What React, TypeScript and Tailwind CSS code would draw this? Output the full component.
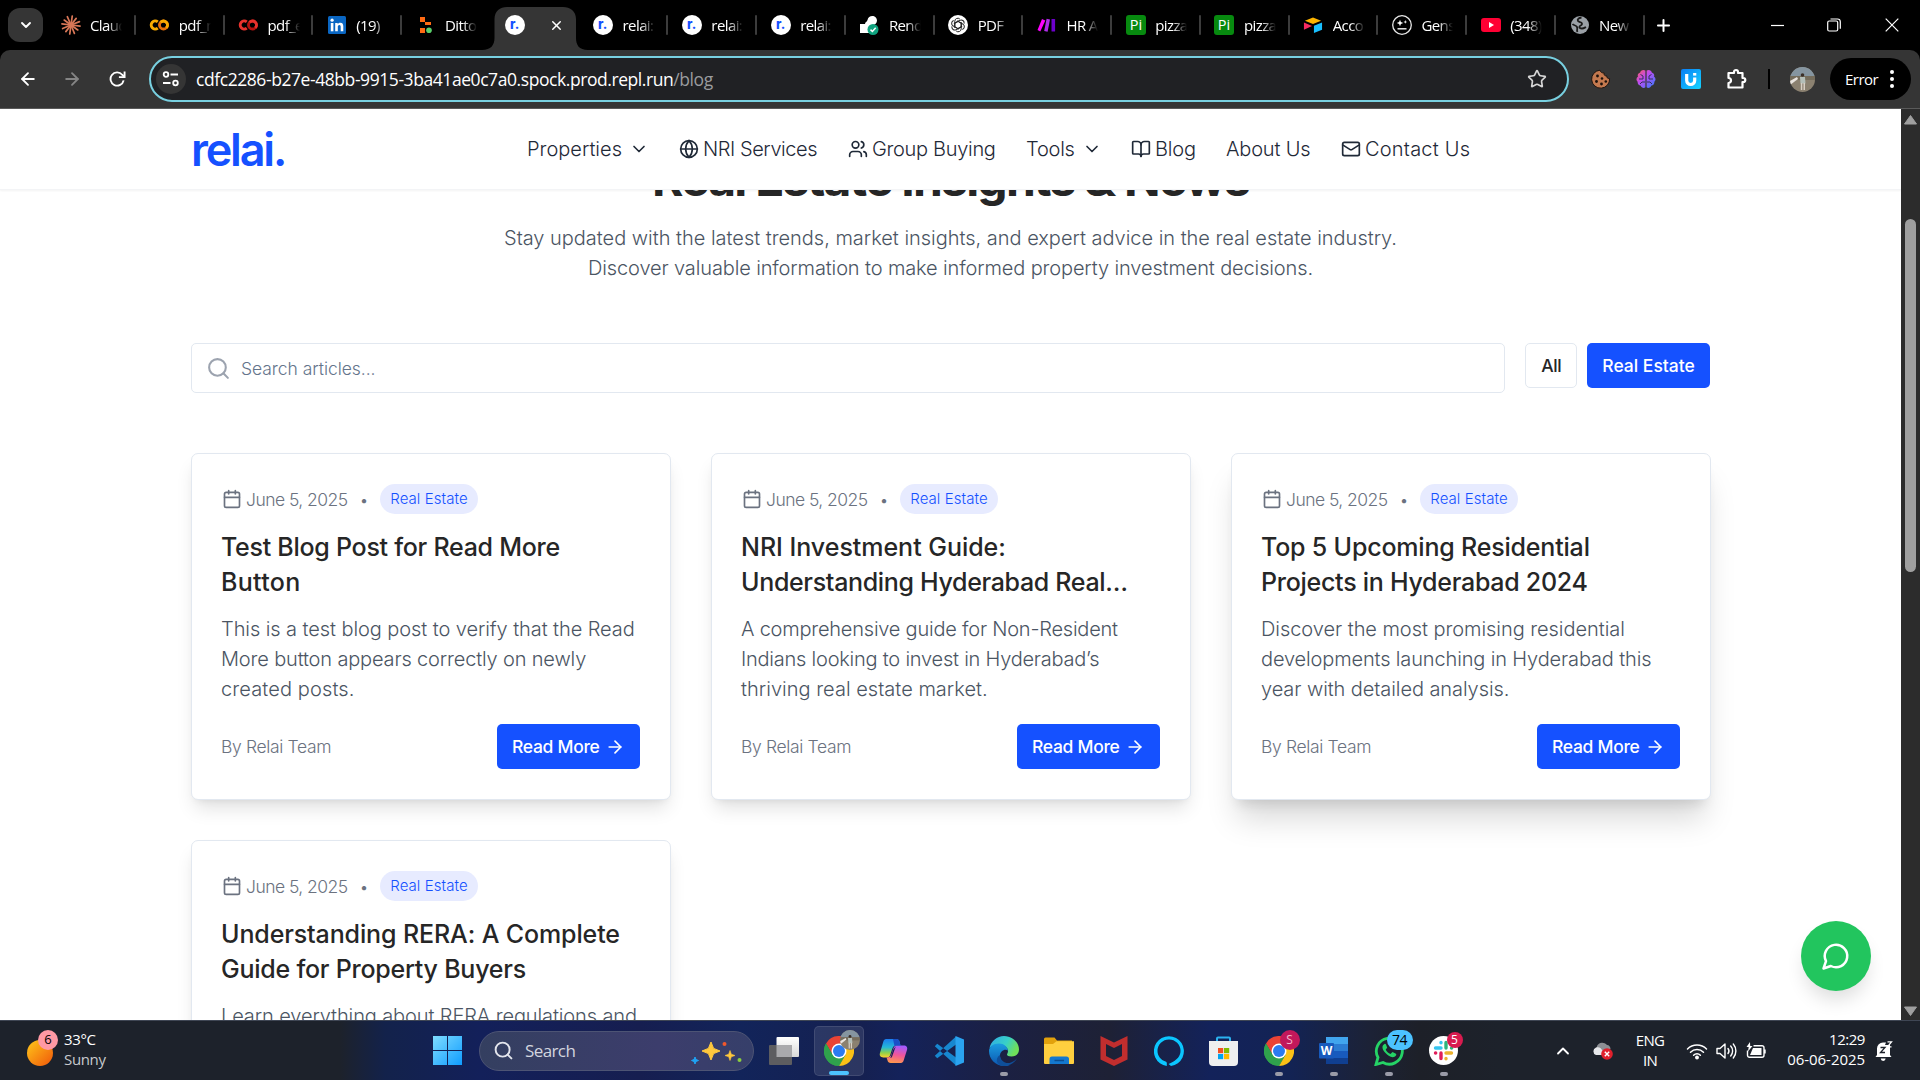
import React, { ReactNode } from 'react';
import {
  ArrowLeft, ArrowRight, BookOpen, Calendar, ChevronDown, ChevronUp, Globe, Mail, Plus, Search, Star, Users, X,
} from 'lucide-react';

/* ---------- favicons ---------- */

const RelaiIcon = () => (
  <svg width="20" height="20" viewBox="0 0 20 20">
    <circle cx="10" cy="10" r="10" fill="#fff" />
    <text x="9.7" y="14" textAnchor="middle" fontFamily="Inter, sans-serif" fontWeight="800" fontSize="13" fill="#1551ff">r.</text>
  </svg>
);

const ClaudeIcon = () => (
  <svg width="20" height="20" viewBox="0 0 20 20" stroke="#d97757" strokeWidth="1.7" strokeLinecap="round">
    {[8, 38, 68, 97, 126, 158, 188, 218, 247, 277, 306, 336].map((a, i) => (
      <line key={a} x1="10" y1="10" x2="10" y2={i % 3 === 1 ? 1.6 : 0.9} transform={`rotate(${a} 10 10)`} />
    ))}
  </svg>
);

const ColabIcon = ({ a, b }: { a: string; b: string }) => (
  <svg width="21" height="20" viewBox="0 0 21 20" fill="none" strokeWidth="3">
    <circle cx="15.2" cy="10" r="4.2" stroke={b} />
    <path d="M9.2 6.8A4.2 4.2 0 1 0 9.2 13.2" stroke={a} />
    <path d="M12.2 7A4.2 4.2 0 0 1 18.2 13" stroke={a} />
  </svg>
);

const LinkedInIcon = () => (
  <svg width="18" height="18" viewBox="0 0 18 18">
    <rect width="18" height="18" rx="1.5" fill="#0a66c2" />
    <g fill="#fff">
      <rect x="2.8" y="7" width="2.6" height="8.3" />
      <circle cx="4.1" cy="4.2" r="1.6" />
      <path d="M7.2 7h2.5v1.2c.5-.8 1.4-1.4 2.6-1.4 2.4 0 3 1.6 3 3.8v4.7h-2.6v-4.2c0-1.1-.1-2.1-1.3-2.1-1.3 0-1.6 1-1.6 2v4.3H7.2z" />
    </g>
  </svg>
);

const DittoIcon = () => (
  <svg width="20" height="20" viewBox="0 0 20 20">
    <path d="M4 2h5v5H4zM9 7h6v3H9zM4 13h5v5H4z" fill="#ff6a13" />
    <circle cx="13" cy="15.2" r="2.8" fill="#5ad06b" />
  </svg>
);

const RenderIcon = () => (
  <svg width="20" height="20" viewBox="0 0 20 20">
    <path d="M1 9h5c0-2 2-2 2.500-4C9 2.500 11 1 13.300 1c2.500 0 4.700 2 4.700 4.600 0 2.700-2 4.500-4.500 4.700-1.800.1-3.500 1-3.500 3V18H1z" fill="#fff" />
    <circle cx="14" cy="14.500" r="5.500" fill="#10a37f" />
    <path d="M11.500 14.600l1.900 1.900 3.300-3.800" stroke="#fff" strokeWidth="1.500" fill="none" />
  </svg>
);

const OpenAiIcon = () => (
  <svg width="20" height="20" viewBox="0 0 20 20">
    <circle cx="10" cy="10" r="10" fill="#fff" />
    <g fill="none" stroke="#222" strokeWidth="1">
      {[0, 60, 120, 180, 240, 300].map((a) => (
        <path key={a} d="M6.800 8V6.200a3 3 0 0 1 5-2.200M9 5.800l4.300 2.500v3.600" transform={`rotate(${a} 10 10)`} />
      ))}
    </g>
  </svg>
);

const MakeIcon = () => (
  <svg width="20" height="20" viewBox="0 0 20 20">
    <path d="M5 4l3.300 1.500-5 11L.500 15z" fill="#ff00ff" />
    <path d="M9.600 3.800l3.400.7-2.400 12.300-3.400-.8z" fill="#b02de9" />
    <rect x="14.500" y="4" width="3.600" height="12.500" rx=".6" fill="#6d00cc" />
  </svg>
);

const PiIcon = () => (
  <svg width="20" height="20" viewBox="0 0 20 20">
    <rect width="20" height="20" rx="3" fill="#078a0f" />
    <text x="10" y="15.200" textAnchor="middle" fontFamily="Open Sans, sans-serif" fontSize="14.500" fill="#fff">Pi</text>
  </svg>
);

const AirtableIcon = () => (
  <svg width="21" height="20" viewBox="0 0 21 20">
    <path d="M2 5.500L10.500 2 19 5.500 10.500 9z" fill="#fcb400" />
    <path d="M20 7.500v7.500l-8.500 3.500v-7.700z" fill="#18bfff" />
    <path d="M1 7.500l8.500 3.500L1 15z" fill="#f82b60" />
  </svg>
);

const GensparkIcon = () => (
  <svg width="20" height="20" viewBox="0 0 20 20" fill="none" stroke="#e8e8e8">
    <circle cx="10" cy="10" r="9.300" strokeWidth="1.300" />
    <path d="M5.500 13.800h9" strokeWidth="1.500" />
    <path d="M8 4.800l.9 2.300 2.300.9-2.300.9L8 11.200l-.9-2.300L4.800 8l2.300-.9zM13.300 5l.5 1.400 1.400.5-1.400.5-.5 1.400-.5-1.400-1.400-.5 1.400-.5z" fill="#fff" stroke="none" />
  </svg>
);

const YoutubeIcon = () => (
  <svg width="20" height="20" viewBox="0 0 20 20">
    <rect y="3" width="20" height="14" rx="3" fill="#ff0033" />
    <path d="M8 7l5 3-5 3z" fill="#fff" />
  </svg>
);

const GlobeIcon = () => (
  <svg width="20" height="20" viewBox="0 0 20 20">
    <circle cx="10" cy="10" r="9" fill="#9aa0a6" />
    <path d="M11.500 2.500c-3 .5-4.500 2-3.500 3.500s3.500.5 4 2.500-2 1.800-2.500 3 .8 2 2.500 2 3-1 4-1.500M2.500 9c1 1.500 3.500 1 4.500 3s-.8 3 .5 5" stroke="#1a1a1a" strokeWidth="1.800" fill="none" />
  </svg>
);

const tabs: { icon: ReactNode; title?: string; active?: boolean }[] = [
  { icon: <ClaudeIcon />, title: 'Claude' },
  { icon: <ColabIcon a="#f9ab00" b="#e8710a" />, title: 'pdf_m' },
  { icon: <ColabIcon a="#e8322d" b="#b3120f" />, title: 'pdf_e' },
  { icon: <LinkedInIcon />, title: '(19)' },
  { icon: <DittoIcon />, title: 'Ditto' },
  { icon: <RelaiIcon />, active: true },
  { icon: <RelaiIcon />, title: 'relai:' },
  { icon: <RelaiIcon />, title: 'relai:' },
  { icon: <RelaiIcon />, title: 'relai:' },
  { icon: <RenderIcon />, title: 'Rend' },
  { icon: <OpenAiIcon />, title: 'PDF' },
  { icon: <MakeIcon />, title: 'HR A' },
  { icon: <PiIcon />, title: 'pizza' },
  { icon: <PiIcon />, title: 'pizza' },
  { icon: <AirtableIcon />, title: 'Acco' },
  { icon: <GensparkIcon />, title: 'Gens' },
  { icon: <YoutubeIcon />, title: '(348)' },
  { icon: <GlobeIcon />, title: 'New' },
];

function TabStrip() {
  return (
    <div className="flex h-[50px] items-end bg-black">
      <button className="mb-2 ml-2 mr-1 flex h-[34px] w-[35px] items-center justify-center rounded-xl bg-[#353535]">
        <ChevronDown size={16} strokeWidth={2.800} />
      </button>
      {tabs.map((t, i) =>
        t.active ? (
          <div key={i} className="relative flex h-[50px] w-[88.780px] shrink-0 items-end">
            <svg className="absolute bottom-0 left-[-9px]" width="106" height="43" viewBox="0 0 106 43">
              <path d="M0 43C9 43 12.500 38 12.500 31V12C12.500 4 18 0 25 0H81C88 0 94 4 94 12V31C94 38 97 43 106 43Z" fill="#353535" />
            </svg>
            <div className="relative flex h-[50px] items-center pl-[14px]">
              {t.icon}
              <X size={15} strokeWidth={2.300} className="ml-[24px]" />
            </div>
          </div>
        ) : (
          <div key={i} className="flex h-[50px] w-[88.780px] shrink-0 items-center">
            <div className="ml-[13.500px] flex w-5 justify-center">{t.icon}</div>
            <div className="ml-[9.500px] w-[32px] overflow-hidden whitespace-nowrap text-[15px] tracking-[-0.600px] [mask-image:linear-gradient(to_right,black_55%,transparent)]">
              {t.title}
            </div>
            {i !== 4 && <div className="ml-auto h-5 w-[2px] rounded bg-[#3c3c3c]" />}
          </div>
        ),
      )}
      <div className="flex h-[50px] flex-1 items-center pl-[9px]">
        <Plus size={19} strokeWidth={2.500} />
        <svg className="ml-[98px]" width="13" height="13" viewBox="0 0 13 13"><path d="M0 6.500h13" stroke="#fff" strokeWidth="1.200" /></svg>
        <svg className="ml-[43px]" width="14" height="14" viewBox="0 0 14 14" fill="none" stroke="#fff" strokeWidth="1.200">
          <rect x=".7" y="3" width="10" height="10" rx="1.500" /><path d="M3.500 1h7a2.800 2.800 0 0 1 2.800 2.800v7" />
        </svg>
        <svg className="ml-[44px]" width="14" height="14" viewBox="0 0 14 14"><path d="M.7.7l12.600 12.600M13.300.7L.7 13.300" stroke="#fff" strokeWidth="1.200" /></svg>
      </div>
    </div>
  );
}

/* Beach photo used for the signed-in profile */
const Avatar = ({ size }: { size: number }) => (
  <svg width={size} height={size} viewBox="0 0 25 25">
    <defs>
      <clipPath id="avatarClip"><circle cx="12.500" cy="12.500" r="12.500" /></clipPath>
    </defs>
    <g clipPath="url(#avatarClip)">
      <rect width="25" height="25" fill="#8b8170" />
      <rect width="25" height="9" fill="#8595a0" />
      <rect y="9" width="25" height="4" fill="#756d5c" />
      <path d="M0 14l7-4 1 2-8 6z" fill="#e9e4df" />
      <circle cx="12.500" cy="8" r="1.800" fill="#3a2f28" />
      <path d="M10 10h5l.5 6.500h-5z" fill="#b4bfb9" />
      <path d="M10.800 16h1.500v7h-1.500zM13.500 16H15v7h-1.500z" fill="#d8cfc4" />
    </g>
  </svg>
);

function Toolbar() {
  return (
    <div className="h-[59px] bg-black">
      <div className="flex h-[59px] items-center rounded-t-[10px] border-b border-[#5a5a5a] bg-[#353535]">
        <ArrowLeft size={20} strokeWidth={2.200} className="ml-[18px]" />
        <ArrowRight size={20} strokeWidth={2.200} className="ml-[24px] text-[#858585]" />
        <svg className="ml-[27px]" width="17" height="18" viewBox="0 0 18 18" fill="none" stroke="#fff" strokeWidth="2">
          <path d="M15.500 10.500A7 7 0 1 1 14 4.500L16 6.500" /><path d="M16.500 1v6h-6" />
        </svg>
        <div className="ml-[23px] flex h-[46px] w-[1420px] items-center rounded-full border-2 border-[#78d0e0] bg-[#202124] pl-[5px]">
          <div className="flex size-[30px] items-center justify-center rounded-full bg-[#353535]">
            <svg width="18" height="18" viewBox="0 0 18 18" fill="none" stroke="#fff" strokeWidth="1.800">
              <circle cx="4" cy="4.500" r="2.300" /><path d="M8.500 4.500H16M1 13h7.500" /><circle cx="13.500" cy="13" r="2.300" />
            </svg>
          </div>
          <div className="ml-[10px] mt-[1px] text-[17.500px] tracking-[-0.430px]">
            cdfc2286-b27e-48bb-9915-3ba41ae0c7a0.spock.prod.repl.run<span className="text-[#9a9b9e]">/blog</span>
          </div>
          <Star size={20} strokeWidth={2} className="ml-auto mr-[20px] text-[#d6d6d6]" />
        </div>
        <svg className="ml-[22px]" width="20" height="20" viewBox="0 0 20 20">
          <path d="M9 1.200A9 9 0 1 0 18.600 9.500c-2 .3-3-1-2.800-2.600-2 .2-3.200-1-2.600-2.900C11 4.200 9.300 3 9 1.200z" fill="#c4794f" stroke="#201510" strokeWidth="1" />
          <g fill="#1c110c"><circle cx="6.500" cy="7" r="1.400" /><circle cx="11" cy="9.500" r="1.300" /><circle cx="5.500" cy="12.500" r="1.400" /><circle cx="10.500" cy="15" r="1.400" /><circle cx="14.800" cy="12.500" r="1.300" /></g>
        </svg>
        <svg className="ml-[25px]" width="20" height="20" viewBox="0 0 20 20">
          <defs><linearGradient id="brain" x1="0" y1="0" x2="1" y2="1"><stop offset="0" stopColor="#ff5a5a" /><stop offset=".4" stopColor="#c04cf0" /><stop offset="1" stopColor="#2f7dff" /></linearGradient></defs>
          <path d="M9.400 1.500C7 0 4.500 1.500 4.200 3.500 2 4 1.200 6 2 7.500 0 9 0 11.500 1.600 12.700 1.400 15 3 16.500 4.500 16.500 5.500 19 8 19.500 9.400 18.200zM10.600 1.500C13 0 15.500 1.500 15.800 3.500 18 4 18.800 6 18 7.500 20 9 20 11.500 18.400 12.700 18.600 15 17 16.500 15.500 16.500 14.500 19 12 19.500 10.600 18.200z" fill="url(#brain)" />
          <path d="M4.500 5.500l2.500 1.500v3H3M9 13H6l-2 2M15.500 5.500L13 7v3h4M11 13h3l2 2" fill="none" stroke="#35305a" strokeWidth="1" />
        </svg>
        <svg className="ml-[25px]" width="20" height="20" viewBox="0 0 20 20">
          <defs><linearGradient id="ui" x1="0" y1="0" x2="1" y2="1"><stop offset="0" stopColor="#0a7df5" /><stop offset="1" stopColor="#14d4ff" /></linearGradient></defs>
          <rect width="20" height="20" rx="2" fill="url(#ui)" />
          <path d="M5.700 5v6.500a4 4 0 0 0 8 0V8.500" fill="none" stroke="#fff" strokeWidth="3.200" />
          <rect x="12.100" y="4" width="3.200" height="2.600" fill="#fff" />
        </svg>
        <svg className="ml-[25px]" width="22" height="22" viewBox="0 0 22 22" fill="none" stroke="#fff" strokeWidth="2.200" strokeLinejoin="round">
          <path d="M2.500 5H8V4a2 2 0 0 1 4 0v1h4.500v5h.8a2 2 0 0 1 0 4h-.8v5.500h-14V15a2.500 2.500 0 0 0 0-5z" />
        </svg>
        <div className="ml-[20px] mr-[20px] h-5 w-[2px] bg-black" />
        <Avatar size={25} />
        <div className="ml-[15px] flex h-[42px] w-[81px] items-center rounded-full bg-black pl-[15px] text-[15px] tracking-[-0.500px]">
          Error
          <svg className="ml-[11px]" width="6" height="20" viewBox="0 0 6 20" fill="#fff"><circle cx="3" cy="3" r="2" /><circle cx="3" cy="10" r="2" /><circle cx="3" cy="17" r="2" /></svg>
        </div>
      </div>
    </div>
  );
}

/* ---------- page ---------- */

function SiteHeader() {
  return (
    <header className="relative z-10 flex h-[81px] shrink-0 items-center border-b border-[#f3f4f6] bg-white pl-[191px] shadow-xs">
      <div className="w-[336px] text-[45px] font-semibold leading-none tracking-[-2.200px] text-[#1551ff]">relai.</div>
      <nav className="flex items-center whitespace-nowrap text-[20px] font-light leading-[30px] text-[#1f2937]">
        <a className="flex w-[152px] items-center"><span>Properties</span><ChevronDown size={20} className="ml-[7px]" /></a>
        <a className="flex w-[169px] items-center gap-[4px] tracking-[-0.440px]"><Globe size={20} />NRI Services</a>
        <a className="flex w-[178px] items-center gap-[4px] tracking-[-0.320px]"><Users size={20} />Group Buying</a>
        <a className="flex w-[105px] items-center tracking-[-0.240px]">Tools<ChevronDown size={20} className="ml-[7px]" /></a>
        <a className="flex w-[95px] items-center gap-[4px] tracking-[-0.200px]"><BookOpen size={20} />Blog</a>
        <a className="w-[115px] tracking-[-0.180px]">About Us</a>
        <a className="flex items-center gap-[4px] tracking-[0.220px]"><Mail size={20} />Contact Us</a>
      </nav>
    </header>
  );
}

type Line = [text: string, tracking: string];

const posts: { title: Line[]; body: Line[]; shadow: string }[] = [
  {
    title: [['Test Blog Post for Read More', 'tracking-[-0.270px]'], ['Button', 'tracking-[0.300px]']],
    body: [
      ['This is a test blog post to verify that the Read', 'tracking-[-0.080px]'],
      ['More button appears correctly on newly', 'tracking-[-0.160px]'],
      ['created posts.', 'tracking-[0.120px]'],
    ],
    shadow: 'shadow-[0_12px_19px_-4px_rgba(0,0,0,0.12),0_4px_8px_-5px_rgba(0,0,0,0.1)]',
  },
  {
    title: [['NRI Investment Guide:', 'tracking-[-0.030px]'], ['Understanding Hyderabad Real…', 'tracking-[-0.330px]']],
    body: [
      ['A comprehensive guide for Non-Resident', 'tracking-[-0.220px]'],
      ['Indians looking to invest in Hyderabad’s', 'tracking-[-0.230px]'],
      ['thriving real estate market.', 'tracking-[0.020px]'],
    ],
    shadow: 'shadow-[0_12px_19px_-4px_rgba(0,0,0,0.12),0_4px_8px_-5px_rgba(0,0,0,0.1)]',
  },
  {
    title: [['Top 5 Upcoming Residential', 'tracking-[-0.190px]'], ['Projects in Hyderabad 2024', 'tracking-[-0.270px]']],
    body: [
      ['Discover the most promising residential', 'tracking-[-0.050px]'],
      ['developments launching in Hyderabad this', 'tracking-[-0.140px]'],
      ['year with detailed analysis.', 'tracking-[-0.080px]'],
    ],
    shadow: 'shadow-[0_25px_31px_-6px_rgba(0,0,0,0.15),0_10px_12px_-7px_rgba(0,0,0,0.12)]',
  },
  {
    title: [['Understanding RERA: A Complete', 'tracking-[-0.120px]'], ['Guide for Property Buyers', 'tracking-[-0.240px]']],
    body: [
      ['Learn everything about RERA regulations and', 'tracking-[-0.110px]'],
      ['how they protect property buyers in', 'tracking-[-0.110px]'],
      ['Telangana.', 'tracking-[-0.110px]'],
    ],
    shadow: 'shadow-[0_12px_19px_-4px_rgba(0,0,0,0.12),0_4px_8px_-5px_rgba(0,0,0,0.1)]',
  },
];

function PostCard({ post }: { post: (typeof posts)[number] }) {
  return (
    <article className={`h-[347px] rounded-[7px] border border-[#e2e8f0] bg-white py-[30px] pl-[29px] pr-[30px] whitespace-nowrap ${post.shadow}`}>
      <div className="flex h-[30px] items-center pl-[1px] text-[17.500px] font-light text-[#6b7280]">
        <Calendar size={20} />
        <span className="ml-[4px] mt-[2px] tracking-[-0.540px]">June 5, 2025</span>
        <span className="ml-[12px] mt-[1px] text-[16px]">•</span>
        <span className="ml-auto mr-[162px] flex h-[30px] w-[98px] items-center justify-center rounded-full bg-[#e7ebff] text-[15px] tracking-[0.080px] text-[#1551ff]">
          Real Estate
        </span>
      </div>
      <h2 className="mt-[16px] text-[25px] font-medium leading-[35px] text-[#262626]">
        {post.title.map(([t, c]) => <div key={t} className={c}>{t}</div>)}
      </h2>
      <div className="mt-[14px] text-[20px] font-light leading-[30px] text-[#4b5563]">
        {post.body.map(([t, c]) => <div key={t} className={c}>{t}</div>)}
      </div>
      <div className="mt-[20px] flex items-center justify-between">
        <span className="mt-[2px] text-[17.500px] font-light tracking-[-0.350px] text-[#6b7280]">By Relai Team</span>
        <button className="flex h-[45px] w-[143px] items-center justify-between rounded-[5px] bg-[#1551ff] px-[15px] text-[17.500px] font-medium tracking-[-0.300px] text-white">
          <span className="mt-[2px]">Read More</span> <ArrowRight size={20} />
        </button>
      </div>
    </article>
  );
}

function Page() {
  return (
    <div className="relative flex h-[911px] overflow-hidden bg-white font-[Inter,sans-serif]">
      <div className="flex w-[1901px] flex-col">
        <SiteHeader />
        <main className="w-[1901px] px-[191px]">
          <div className="-mt-[41px] flex flex-col items-center whitespace-nowrap">
            <h1 className="text-[48px] font-bold leading-[60px] tracking-[-1.800px] text-[#262626]">Real Estate Insights &amp; News</h1>
            <div className="mt-[14px] flex flex-col items-center text-[20px] font-light leading-[30px] text-[#4b5563]">
              <div className="tracking-[-0.020px]">Stay updated with the latest trends, market insights, and expert advice in the real estate industry.</div>
              <div className="tracking-[-0.130px]">Discover valuable information to make informed property investment decisions.</div>
            </div>
          </div>
          <div className="mt-[60px] flex h-[50px] items-start">
            <div className="flex h-[50px] w-[1316px] items-center rounded-[5px] border border-[#e2e8f0] pl-[14px] text-[17.500px] font-light text-[#64748b]">
              <Search size={25} className="text-[#9ca3af]" />
              <span className="ml-[10px] mt-[2px] tracking-[-0.050px]">Search articles...</span>
            </div>
            <button className="ml-[20px] h-[45px] w-[52px] rounded-[5px] border border-[#e2e8f0] pt-[2px] text-[17.500px] font-medium tracking-[-0.400px] text-[#262626]">All</button>
            <button className="ml-[10px] h-[45px] w-[123px] rounded-[5px] bg-[#1551ff] pt-[2px] text-[17.500px] font-medium text-white">Real Estate</button>
          </div>
          <div className="mt-[60px] grid grid-cols-[480px_480px_480px] gap-[40px]">
            {posts.map((p) => <PostCard key={p.title[0][0]} post={p} />)}
          </div>
        </main>
      </div>
      <div className="flex w-[19px] flex-col items-center bg-[#2c2c2c] py-[6px]">
        <svg width="13" height="10" viewBox="0 0 13 10"><path d="M6.500.5L12.500 9H.5z" fill="#9f9f9f" stroke="#9f9f9f" strokeLinejoin="round" /></svg>
        <div className="mt-[94px] h-[353px] w-[11px] rounded-full bg-[#9f9f9f]" />
        <svg className="mb-[-2px] mt-auto" width="13" height="10" viewBox="0 0 13 10"><path d="M6.500 9.500L.5 1h12z" fill="#9f9f9f" stroke="#9f9f9f" strokeLinejoin="round" /></svg>
      </div>
      <button className="absolute bottom-[29px] right-[49px] flex size-[70px] items-center justify-center rounded-full bg-[#22c55e] shadow-[0_12px_19px_-4px_rgba(0,0,0,0.14)]">
        <svg width="30" height="30" viewBox="0 0 24 24" fill="none" stroke="#fff" strokeWidth="2" strokeLinecap="round" strokeLinejoin="round"><path d="M7.900 20A9 9 0 1 0 4 16.100L2 22Z" /></svg>
      </button>
    </div>
  );
}

/* ---------- taskbar ---------- */

const ChromeLogo = () => (
  <svg width="30" height="30" viewBox="0 0 30 30">
    <path d="M28 7.500A15 15 0 0 1 15 30L21.500 18.500 21.500 8z" fill="#fbc116" />
    <path d="M15 30A15 15 0 0 1 2 7.500L8.500 18.500 18 21.500z" fill="#2fa24c" />
    <path d="M28 7.500L21.500 18.500 15 30 15 15 15 7.500z" fill="#fbc116" />
    <path d="M2 7.500A15 15 0 0 1 28 7.500H15L8.500 18.500z" fill="#ea4335" />
    <path d="M2 7.500L8.500 18.700 21.500 18.700 15 30A15 15 0 0 1 2 7.500z" fill="#2fa24c" />
    <circle cx="15" cy="15" r="7.500" fill="#fff" />
    <circle cx="15" cy="15" r="6" fill="#2b7bf0" />
  </svg>
);

const TaskViewIcon = () => (
  <svg width="30" height="28" viewBox="0 0 30 28">
    <defs><linearGradient id="tv" x1="0" y1="0" x2="0" y2="1"><stop offset="0" stopColor="#fff" /><stop offset="1" stopColor="#d8d8d8" /></linearGradient></defs>
    <rect x="7.500" width="22.500" height="20" rx="1" fill="url(#tv)" />
    <rect y="8" width="23" height="20" rx="1" fill="#5d5d60" />
    <rect x="7.500" y="8" width="15.500" height="12" fill="#a9a9ac" />
  </svg>
);

const CopilotIcon = () => (
  <svg width="29" height="26" viewBox="0 0 30 28">
    <defs>
      <linearGradient id="cpA" x1="0" y1="0" x2="0" y2="1"><stop offset="0" stopColor="#1b7cf0" /><stop offset=".45" stopColor="#25b8d8" /><stop offset=".75" stopColor="#8fd14a" /><stop offset="1" stopColor="#ffd02e" /></linearGradient>
      <linearGradient id="cpB" x1=".5" y1="0" x2=".3" y2="1"><stop offset="0" stopColor="#a35bff" /><stop offset=".5" stopColor="#f0559b" /><stop offset="1" stopColor="#ff9a4a" /></linearGradient>
    </defs>
    <path d="M7 1h11c2 0 3 1 3.500 3l1 4h-4c-3 0-4 1-5 4l-2 6c-.6 2-1.500 3-3.500 3H4c-3 0-4.500-2-3.500-5L4 4c.6-2 1.500-3 3-3z" fill="url(#cpA)" />
    <path d="M23 27H12c-2 0-3-1-3.500-3l-1-3c3 0 4.500-1 5.500-4l2-6c.6-2 1.500-3 3.500-3H26c3 0 4.500 2 3.500 5L26 24c-.6 2-1.500 3-3 3z" fill="url(#cpB)" />
    <path d="M14.500 1H18c2 0 3 1 3.500 3l1 4h-4c-1 0-2 .2-2.500.7z" fill="#1950c8" />
    <path d="M17.500 9L13.500 20c-.4 1-1 1.600-1.800 1.600L14.500 13z" fill="#132250" />
  </svg>
);

const VsCodeIcon = () => (
  <svg width="30" height="30" viewBox="0 0 30 30">
    <path d="M22 .500L.800 19.800l2.400 2.400L22 8.500zM22 29.500L.800 10.200l2.400-2.400L22 21.500z" fill="#1787d0" />
    <path d="M21.500 0L30 3.500v23L21.500 30z" fill="#2aa3f0" />
  </svg>
);

const EdgeIcon = () => (
  <svg width="30" height="30" viewBox="0 0 30 30">
    <defs>
      <linearGradient id="edA" x1="0" y1="0" x2="1" y2=".4"><stop offset="0" stopColor="#2fa9e6" /><stop offset=".6" stopColor="#38d0c8" /><stop offset="1" stopColor="#6fe05a" /></linearGradient>
      <linearGradient id="edB" x1="0" y1="0" x2="0" y2="1"><stop offset="0" stopColor="#1b9de0" /><stop offset="1" stopColor="#0c56b0" /></linearGradient>
    </defs>
    <path d="M.5 12C2 5 8 0 15 0c8 0 15 6 15 13.500 0 4.500-3.500 7-7.500 7-3 0-4.500-1-4.500-2 0-.8 1-1.500 1-3.500 0-3.500-4-6.500-8.500-6.500-4 0-8 1.500-10 3.500z" fill="url(#edA)" />
    <path d="M0 15c0-4 4-7.500 10-7.500 5 0 8.500 3.500 9 7-2.500-2-8.500 0-8 6 .5 5 5 9 10 8.500C19 30 17 30 15 30 6.500 30 0 23 0 15z" fill="url(#edB)" />
    <path d="M11 19c0 6 6 9.500 11 7.500 3-1 5-3 6-4.500-1.500 4-7 8-13 8-7 0-10-7-4-11z" fill="#0f4f9a" />
  </svg>
);

const FolderIcon = () => (
  <svg width="30" height="27" viewBox="0 0 30 27">
    <path d="M0 2a1.500 1.500 0 0 1 1.500-1.500h9L13 3.500h15V12H0z" fill="#e2a10c" />
    <path d="M0 7h9l3.500-2.800H30V26a1 1 0 0 1-1 1H1a1 1 0 0 1-1-1z" fill="#ffcf3f" />
    <path d="M5.500 27v-5a2.500 2.500 0 0 1 2.500-2.500h14.500A2.500 2.500 0 0 1 25 22v5z" fill="#1478cf" />
    <path d="M10.500 23.500h9.500" stroke="#0b4d90" strokeWidth="1.500" />
  </svg>
);

const McAfeeIcon = () => (
  <svg width="28" height="30" viewBox="0 0 28 30">
    <path d="M.5 0L14 6.500 27.500 0v23.500L14 30 .5 23.500zM6 8v12l8 4 8-4V8l-8 4z" fill="#c12e2e" fillRule="evenodd" />
  </svg>
);

const AlexaIcon = () => (
  <svg width="30" height="30" viewBox="0 0 30 30">
    <path d="M12.800 30A15 15 0 1 1 17 30L14.500 28C24 24 26.500 19.500 26.500 15a11.500 11.500 0 1 0-23 0c0 5 3.300 9 8 10.500 1.200.4 1.500 1.500 1.300 2.500z" fill="#0bc6ff" />
  </svg>
);

const StoreIcon = () => (
  <svg width="29" height="30" viewBox="0 0 29 30">
    <path d="M8 6V2.500A1 1 0 0 1 9 1.500h11a1 1 0 0 1 1 1V6" fill="none" stroke="#2bb2f0" strokeWidth="2" />
    <path d="M0 5h29v21a4 4 0 0 1-4 4H4a4 4 0 0 1-4-4z" fill="#efefef" />
    <rect x="9" y="12" width="5.200" height="5.200" fill="#f25022" /><rect x="15" y="12" width="5.200" height="5.200" fill="#7fba00" />
    <rect x="9" y="18" width="5.200" height="5.200" fill="#00a4ef" /><rect x="15" y="18" width="5.200" height="5.200" fill="#ffb900" />
  </svg>
);

const WordIcon = () => (
  <svg width="29" height="27" viewBox="0 0 29 27">
    <rect x="7" width="22" height="7" fill="#41a5ee" /><rect x="7" y="7" width="22" height="7" fill="#2b7cd3" />
    <rect x="7" y="14" width="22" height="7" fill="#185abd" /><rect x="7" y="21" width="22" height="6" fill="#103f91" />
    <rect y="6" width="15" height="15.500" rx="1" fill="#185abd" />
    <text x="7.500" y="18" textAnchor="middle" fontFamily="Open Sans, sans-serif" fontWeight="700" fontSize="12" fill="#fff">W</text>
  </svg>
);

const WhatsAppIcon = () => (
  <svg width="30" height="30" viewBox="0 0 30 30">
    <path d="M2 28.500l2-7A13 13 0 1 1 9 26.500z" fill="none" stroke="#25d366" strokeWidth="2.800" />
    <path d="M10.500 8c-3 1.500-2.500 5 .5 8.500s7 6 10 4c1.800-1.300 1.500-2.500.5-3l-3-1.400-2 2c-2-.7-4-2.600-4.800-4.600l1.500-1.800L12 8.500c-.3-.6-1-.8-1.500-.5z" fill="#25d366" />
  </svg>
);

const SlackIcon = () => (
  <svg width="29" height="29" viewBox="0 0 29 29">
    <circle cx="14.500" cy="14.500" r="14.500" fill="#fff" />
    <g strokeWidth="3.400" strokeLinecap="round">
      <path d="M12 6.500v.2M6.500 12H12" stroke="#36c5f0" />
      <path d="M17 6.500V12M22.500 12h.2" stroke="#2eb67d" />
      <path d="M17 17h5.500M17 22.500v.2" stroke="#ecb22e" />
      <path d="M12 17v5.500M6.500 17h.2" stroke="#e01e5a" />
    </g>
  </svg>
);

const pinned: { icon: ReactNode; badge?: ReactNode; running?: boolean; active?: boolean }[] = [
  { icon: <TaskViewIcon /> },
  { icon: <ChromeLogo />, active: true, badge: <div className="absolute left-[25px] top-[3px]"><Avatar size={20} /></div> },
  { icon: <CopilotIcon /> },
  { icon: <VsCodeIcon /> },
  { icon: <EdgeIcon />, running: true },
  { icon: <FolderIcon /> },
  { icon: <McAfeeIcon /> },
  { icon: <AlexaIcon /> },
  { icon: <StoreIcon /> },
  { icon: <ChromeLogo />, running: true, badge: <div className="absolute left-[26px] top-[4px] flex size-5 items-center justify-center rounded-full bg-[#c2185b] text-[12px] text-[#f5b8cf]">S</div> },
  { icon: <WordIcon />, running: true },
  { icon: <WhatsAppIcon />, running: true, badge: <div className="absolute left-[23px] top-[4px] flex h-5 w-[26px] items-center justify-center rounded-full bg-[#4cc2ff] text-[14px] tracking-[-0.500px] text-black">74</div> },
  { icon: <SlackIcon />, running: true, badge: <div className="absolute left-[28px] top-[6px] flex size-4 items-center justify-center rounded-full bg-[#d81b4f] text-[12px]">5</div> },
];

function Taskbar() {
  return (
    <div className="flex h-[60px] items-center overflow-hidden border-t border-[#3f4654] bg-[linear-gradient(90deg,#1d222b_0px,#1d222b_340px,#13224b_385px,#13205a_480px,#161e50_640px,#12245a_740px,#152050_860px,#14225a_900px,#1b2043_1000px,#1e2135_1110px,#13225a_1210px,#132354_1290px,#1c2236_1370px,#1d2028_1420px,#1d222b_1500px)]">
      <div className="relative ml-[27px] mt-[-6px] h-[36px] w-[36px]">
        <div className="absolute bottom-0 left-0 size-[26px] rounded-full bg-[linear-gradient(135deg,#ffc91a,#f0560a)]" />
        <div className="absolute left-[11px] top-0 flex size-5 items-center justify-center rounded-full bg-[#ff99a4] text-[13px] text-black">6</div>
      </div>
      <div className="ml-[1px] mt-[-4px] w-[369px] text-[15px] leading-[20px] tracking-[-0.350px]"><div>33°C</div><div className="text-[#c8cace]">Sunny</div></div>
      <svg width="29" height="29" viewBox="0 0 29 29">
        <defs><linearGradient id="win" x1="0" y1="0" x2="1" y2="1"><stop offset="0" stopColor="#7fdcff" /><stop offset="1" stopColor="#0f9cff" /></linearGradient></defs>
        <path d="M0 0h14v14H0zM15 0h14v14H15zM0 15h14v14H0zM15 15h14v14H15z" fill="url(#win)" />
      </svg>
      <div className="ml-[17px] flex h-10 w-[275px] items-center rounded-full border border-[#4d5474] bg-[linear-gradient(90deg,#343f60,#3c3d6c_65%,#363f6a)] pl-[13px]">
        <Search size={21} strokeWidth={2.200} className="text-[#e3e5ec]" />
        <span className="ml-[11px] text-[17px] tracking-[-0.600px] text-[#d2d5df]">Search</span>
        <svg className="ml-auto mr-[10px]" width="52" height="30" viewBox="0 0 52 30">
          <path d="M20 6l2.600 6.400 6.400 2.600-6.400 2.600L20 24l-2.600-6.400L11 15l6.400-2.600z" fill="#ffc83d" stroke="#ffc83d" strokeLinejoin="round" />
          <path d="M39 14.500l1.300 3.700 3.700 1.300-3.700 1.300-1.300 3.700-1.300-3.700-3.700-1.300 3.700-1.300z" fill="#ffc83d" stroke="#ffc83d" strokeWidth=".6" />
          <path d="M4 21l1 2.500 2.500 1L5 25.500 4 28l-1-2.500-2.500-1 2.500-1z" fill="#1fa3f5" stroke="#1fa3f5" />
          <circle cx="33.500" cy="8" r="2" fill="#f1582c" /><circle cx="48.500" cy="24" r="2" fill="#8bcf3f" />
        </svg>
      </div>
      <div className="ml-[2px] flex">
        {pinned.map((p, i) => (
          <div key={i} className="flex h-[59px] w-[55px] items-center justify-center">
            <div className={`relative flex size-[50px] items-center justify-center rounded-[5px] ${p.active ? 'border border-white/10 bg-white/10' : ''}`}>
              {p.icon}
              {p.badge}
              {p.active && <div className="absolute bottom-0 left-[14px] h-[4px] w-5 rounded-full bg-[#4cc2ff]" />}
              {p.running && <div className="absolute bottom-0 left-[21px] h-[4px] w-2 rounded-full bg-[#9a9ba8]" />}
            </div>
          </div>
        ))}
      </div>
      <div className="ml-[82px] flex items-center">
        <ChevronUp size={20} strokeWidth={2.200} />
        <svg className="ml-[19px]" width="21" height="18" viewBox="0 0 21 18">
          <path d="M5 4a6 6 0 0 1 10-1c2 0 3.500 2 3.500 4L12 11 4 9z" fill="#8c8f94" />
          <path d="M4 13a4 4 0 0 1 0-7.500c3-1 5 .5 6 2.500L14 13z" fill="#e6e7ea" />
          <circle cx="15" cy="12" r="5.800" fill="#e0202c" /><path d="M12.800 9.800l4.400 4.400m0-4.400l-4.400 4.400" stroke="#fff" strokeWidth="1.400" />
        </svg>
      </div>
      <div className="ml-[20px] mt-[-2px] w-[34px] text-center text-[15px] leading-[20px] tracking-[-0.700px]"><div>ENG</div><div>IN</div></div>
      <svg className="ml-[19px]" width="22" height="18" viewBox="0 0 22 18" fill="none" stroke="#fff" strokeWidth="1.500" strokeLinecap="round">
        <path d="M1.500 7a13.500 13.500 0 0 1 19 0M4.500 10.200a9.300 9.300 0 0 1 13 0M7.600 13.200a4.800 4.800 0 0 1 6.800 0" /><circle cx="11" cy="15.500" r="1.200" fill="#fff" />
      </svg>
      <svg className="ml-[8px]" width="21" height="18" viewBox="0 0 21 18" fill="none" stroke="#fff" strokeWidth="1.400" strokeLinecap="round" strokeLinejoin="round">
        <path d="M1 6.500v5h3l5 4.500V2L4 6.500zM12 6.500a4 4 0 0 1 0 5M14.700 4a7.500 7.500 0 0 1 0 10M17.300 2a10.800 10.800 0 0 1 0 14" />
      </svg>
      <svg className="ml-[9px]" width="21" height="17" viewBox="0 0 21 17" fill="none" stroke="#fff" strokeWidth="1.400">
        <path d="M7.500 3.700H16a2 2 0 0 1 2 2v7.600a2 2 0 0 1-2 2H3.500a2 2 0 0 1-2-2V8.500M19 7.500v4" />
        <path d="M7 6h8.500v7H4z" fill="#fff" stroke="none" /><path d="M4 0L.5 5h2.200L2 9.500 6.500 4H4.200z" fill="#fff" stroke="none" />
      </svg>
      <div className="ml-[18px] mt-[-3px] w-[80px] text-right text-[15px] leading-[20px] tracking-[-0.050px]"><div className="tracking-[-0.450px]">12:29</div><div>06-06-2025</div></div>
      <svg className="ml-[10px]" width="18" height="20" viewBox="0 0 18 20">
        <path d="M2 14V7.500A6 6 0 0 1 8 1.500h3L10 4h5v10l1.500 2H.500z" fill="#fff" /><path d="M5.800 17.500a2.400 2.400 0 0 0 4.800 0z" fill="#fff" />
        <path d="M12.500.8h4l-4 5h4" fill="none" stroke="#fff" strokeWidth="1.300" /><path d="M5.500 6.500h4.500l-4.500 5H10" fill="none" stroke="#1d222b" strokeWidth="1.300" />
      </svg>
    </div>
  );
}

export default function App() {
  return (
    <div className="flex h-[1080px] w-[1920px] flex-col overflow-hidden bg-black font-['Open_Sans','Noto_Sans',sans-serif] text-white">
      <TabStrip />
      <Toolbar />
      <Page />
      <Taskbar />
    </div>
  );
}
